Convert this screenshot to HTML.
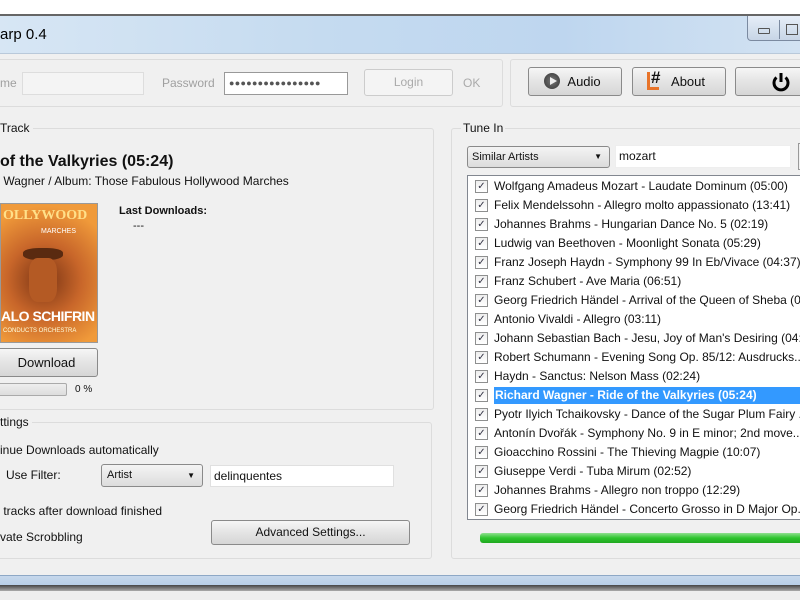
<!DOCTYPE html><html><head><style>
body{margin:0;width:800px;height:600px;overflow:hidden;background:#fff;font-family:"Liberation Sans",sans-serif;font-size:12px;color:#111;position:relative}
.a{position:absolute}
.gb{position:absolute;border:1px solid #dcdcdc;border-radius:3px}
.btn{position:absolute;border:1px solid #8a8a8a;border-radius:3px;background:linear-gradient(#f6f6f6,#e4e4e4 50%,#d6d6d6);text-align:center;box-sizing:border-box}
.inp{position:absolute;background:#fff;border:1px solid #abadb3;box-sizing:border-box}
.row{height:19px;line-height:19px;white-space:nowrap;position:relative;padding-left:26px}
.cb{position:absolute;left:7px;top:3px;width:11px;height:11px;border:1px solid #8e8f8f;background:linear-gradient(#eee,#fff);font-size:10px;line-height:11px;text-align:center;color:#334}
</style></head><body>
<div class="a" style="left:0;top:14px;width:800px;height:2px;background:#666"></div>
<div class="a" style="left:0;top:16px;width:800px;height:37px;background:linear-gradient(90deg,#d7e6f4,#c5dbf0 40%,#bed6ef 70%,#d2e2f2)"></div>
<div class="a" style="left:0;top:26px;font-size:15px;color:#000">arp 0.4</div>
<div class="a" style="left:747px;top:16px;width:53px;height:24px;border:1px solid #7b8aa0;border-top:none;border-radius:0 0 0 4px;background:linear-gradient(#e6eef8,#c7d5e6)"></div>
<div class="a" style="left:758px;top:28px;width:10px;height:4px;border:1px solid #555;border-radius:1px"></div>
<div class="a" style="left:779px;top:20px;width:1px;height:19px;background:#7b8aa0"></div>
<div class="a" style="left:786px;top:24px;width:10px;height:9px;border:1px solid #555"></div>
<div class="a" style="left:0;top:53px;width:800px;height:522px;background:#f0f0f0;border-top:1px solid #b9c9da"></div>
<div class="a" style="left:0;top:575px;width:800px;height:10px;background:linear-gradient(#c6d8ec,#b6cde6);border-top:1px solid #8ea8c6"></div>
<div class="a" style="left:0;top:585px;width:800px;height:6px;background:linear-gradient(#444,#aaa)"></div>
<div class="a" style="left:0;top:591px;width:800px;height:9px;background:#eee"></div>

<div class="gb" style="left:-5px;top:59px;width:506px;height:46px"></div>
<div class="a" style="left:0;top:76px;color:#a0a0a0">me</div>
<div class="inp" style="left:22px;top:72px;width:122px;height:23px;border-color:#ddd;background:#f4f4f4"></div>
<div class="a" style="left:162px;top:76px;color:#a0a0a0">Password</div>
<div class="inp" style="left:224px;top:72px;width:124px;height:23px;border-color:#999;font-size:9px;letter-spacing:.3px;line-height:21px;padding-left:4px;color:#555">●●●●●●●●●●●●●●●●</div>
<div class="btn" style="left:364px;top:69px;width:89px;height:27px;line-height:25px;border-color:#ccc;background:#f4f4f4;color:#aaa">Login</div>
<div class="a" style="left:463px;top:76px;color:#aaa">OK</div>
<div class="gb" style="left:510px;top:59px;width:295px;height:46px"></div>
<div class="btn" style="left:528px;top:67px;width:94px;height:29px;line-height:27px;font-size:13px">&nbsp;&nbsp;&nbsp;&nbsp;&nbsp;Audio</div>
<div class="a" style="left:544px;top:73px;width:16px;height:16px;border-radius:50%;background:radial-gradient(#777,#333)"></div>
<div class="a" style="left:550px;top:77px;width:0;height:0;border-left:7px solid #eee;border-top:4px solid transparent;border-bottom:4px solid transparent"></div>
<div class="btn" style="left:632px;top:67px;width:94px;height:29px;line-height:27px;font-size:13px">&nbsp;&nbsp;&nbsp;&nbsp;&nbsp;About</div>
<div class="a" style="left:647px;top:72px;width:12px;height:18px;border-left:3px solid #e8742a;border-bottom:3px solid #e8742a;box-sizing:border-box"></div>
<div class="a" style="left:651px;top:68px;font-size:17px;font-weight:bold">#</div>
<div class="btn" style="left:735px;top:67px;width:80px;height:29px"></div>
<svg class="a" style="left:770px;top:71px" width="22" height="22" viewBox="0 0 22 22"><path d="M6.5 6.5a7 7 0 1 0 9 0" fill="none" stroke="#000" stroke-width="3"/><path d="M11 2v9" stroke="#000" stroke-width="3"/></svg>

<div class="gb" style="left:-5px;top:128px;width:437px;height:280px"></div>
<div class="a" style="left:0;top:121px;background:#f0f0f0;padding-right:3px">Track</div>
<div class="a" style="left:0;top:153px;font-size:16px;font-weight:bold">of the Valkyries (05:24)</div>
<div class="a" style="left:0;top:174px">&nbsp;Wagner / Album: Those Fabulous Hollywood Marches</div>
<div class="a" style="left:0;top:203px;width:98px;height:140px;border:1px solid #999;box-sizing:border-box;overflow:hidden;background:radial-gradient(circle at 45% 55%,#7a3414,#c8662a 40%,#f09a3a 80%)">
<div class="a" style="left:2px;top:4px;color:#ffe08a;font-weight:bold;font-size:14px;font-family:'Liberation Serif',serif;white-space:nowrap">OLLYWOOD</div>
<div class="a" style="left:40px;top:24px;color:#fff;font-size:7px">MARCHES</div>
<div class="a" style="left:22px;top:44px;width:40px;height:12px;background:#5a2a10;border-radius:40%"></div>
<div class="a" style="left:28px;top:54px;width:28px;height:44px;background:#b45a24;border-radius:30%"></div>
<div class="a" style="left:0;top:104px;color:#fff;font-weight:bold;font-size:14px;white-space:nowrap;letter-spacing:-.5px">ALO SCHIFRIN</div>
<div class="a" style="left:2px;top:124px;color:#ffd;font-size:6px;white-space:nowrap">CONDUCTS ORCHESTRA</div>
</div>
<div class="a" style="left:119px;top:205px;font-weight:bold;font-size:11px">Last Downloads:</div>
<div class="a" style="left:133px;top:220px;font-size:11px">---</div>
<div class="btn" style="left:-5px;top:348px;width:103px;height:29px;line-height:27px;font-size:13px">Download</div>
<div class="a" style="left:-3px;top:383px;width:68px;height:11px;border:1px solid #aaa;border-radius:2px;background:linear-gradient(#eee,#ddd)"></div>
<div class="a" style="left:75px;top:384px;font-size:10px">0 %</div>

<div class="gb" style="left:-5px;top:422px;width:435px;height:135px"></div>
<div class="a" style="left:0;top:415px;background:#f0f0f0;padding-right:3px">ttings</div>
<div class="a" style="left:0;top:443px">inue Downloads automatically</div>
<div class="a" style="left:6px;top:468px">Use Filter:</div>
<div class="btn" style="left:101px;top:464px;width:102px;height:23px;font-size:11px;text-align:left;padding-left:5px;line-height:21px;background:linear-gradient(#f4f4f4,#dcdcdc)">Artist<span style="position:absolute;right:7px;top:0;font-size:8px">▼</span></div>
<div class="inp" style="left:210px;top:465px;width:184px;height:22px;line-height:20px;padding-left:3px;border-color:#e0e0e0">delinquentes</div>
<div class="a" style="left:0;top:504px">&nbsp;tracks after download finished</div>
<div class="a" style="left:0;top:530px">vate Scrobbling</div>
<div class="btn" style="left:211px;top:520px;width:199px;height:25px;line-height:23px">Advanced Settings...</div>

<div class="gb" style="left:451px;top:128px;width:360px;height:429px"></div>
<div class="a" style="left:461px;top:121px;background:#f0f0f0;padding:0 2px">Tune In</div>
<div class="btn" style="left:467px;top:146px;width:143px;height:22px;font-size:11px;text-align:left;padding-left:4px;line-height:20px;background:linear-gradient(#f4f4f4,#dcdcdc)">Similar Artists<span style="position:absolute;right:7px;top:0;font-size:8px">▼</span></div>
<div class="inp" style="left:615px;top:145px;width:176px;height:23px;line-height:21px;padding-left:3px;border-color:#eee">mozart</div>
<div class="a" style="left:798px;top:143px;width:4px;height:25px;border:1px solid #999"></div>
<div class="inp" style="left:467px;top:175px;width:345px;height:345px;border-color:#828790;overflow:hidden;padding-top:1px">
<div class="row"><span class="cb">✓</span>Wolfgang Amadeus Mozart - Laudate Dominum (05:00)</div>
<div class="row"><span class="cb">✓</span>Felix Mendelssohn - Allegro molto appassionato (13:41)</div>
<div class="row"><span class="cb">✓</span>Johannes Brahms - Hungarian Dance No. 5 (02:19)</div>
<div class="row"><span class="cb">✓</span>Ludwig van Beethoven - Moonlight Sonata (05:29)</div>
<div class="row"><span class="cb">✓</span>Franz Joseph Haydn - Symphony 99 In Eb/Vivace (04:37)</div>
<div class="row"><span class="cb">✓</span>Franz Schubert - Ave Maria (06:51)</div>
<div class="row"><span class="cb">✓</span>Georg Friedrich Händel - Arrival of the Queen of Sheba (0...</div>
<div class="row"><span class="cb">✓</span>Antonio Vivaldi - Allegro (03:11)</div>
<div class="row"><span class="cb">✓</span>Johann Sebastian Bach - Jesu, Joy of Man's Desiring (04:...</div>
<div class="row"><span class="cb">✓</span>Robert Schumann - Evening Song Op. 85/12: Ausdrucks...</div>
<div class="row"><span class="cb">✓</span>Haydn - Sanctus: Nelson Mass (02:24)</div>
<div class="row"><span class="cb">✓</span><span style="position:absolute;left:26px;top:1px;right:0;height:17px;background:#3399ff"></span><span style="position:relative;color:#fff;font-weight:bold;padding-left:1px">Richard Wagner - Ride of the Valkyries (05:24)</span></div>
<div class="row"><span class="cb">✓</span>Pyotr Ilyich Tchaikovsky - Dance of the Sugar Plum Fairy ...</div>
<div class="row"><span class="cb">✓</span>Antonín Dvořák - Symphony No. 9 in E minor; 2nd move...</div>
<div class="row"><span class="cb">✓</span>Gioacchino Rossini - The Thieving Magpie (10:07)</div>
<div class="row"><span class="cb">✓</span>Giuseppe Verdi - Tuba Mirum (02:52)</div>
<div class="row"><span class="cb">✓</span>Johannes Brahms - Allegro non troppo (12:29)</div>
<div class="row"><span class="cb">✓</span>Georg Friedrich Händel - Concerto Grosso in D Major Op. ...</div>
</div>
<div class="a" style="left:480px;top:533px;width:330px;height:10px;border-radius:3px;background:linear-gradient(#8fe08f,#2ec52e 50%,#1fa81f)"></div>
</body></html>
